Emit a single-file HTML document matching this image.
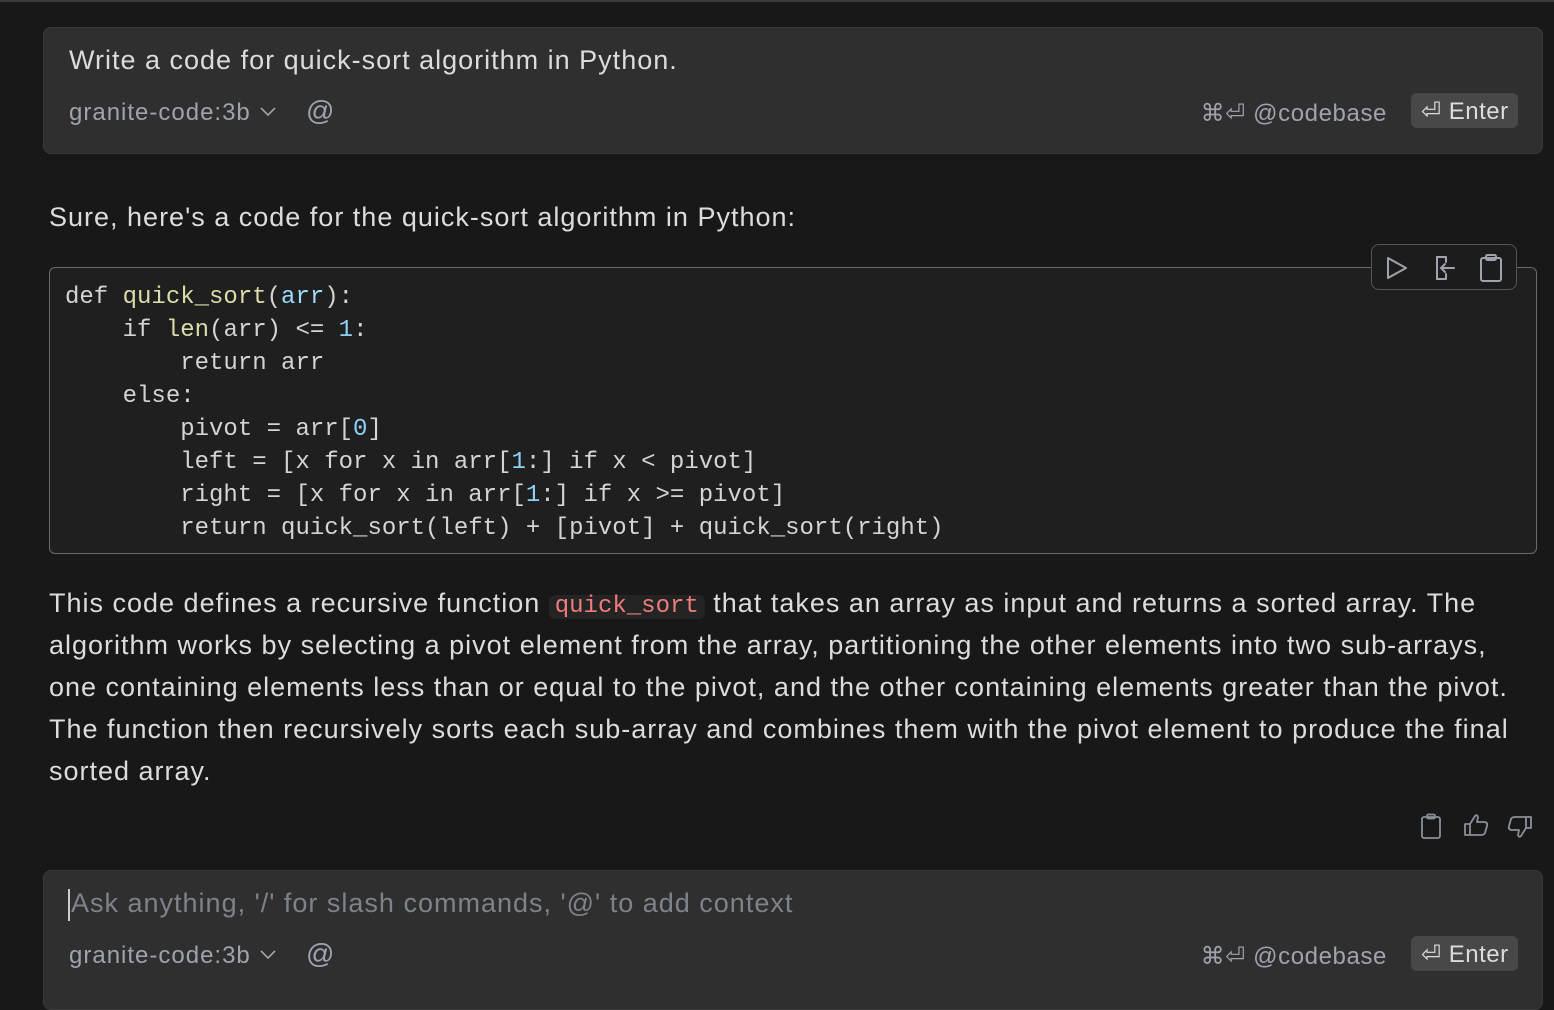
<!DOCTYPE html>
<html><head><meta charset="utf-8"><style>
*{margin:0;padding:0;box-sizing:border-box}
body{width:1554px;height:994px;background:#181818;overflow:hidden;position:relative;font-family:"Liberation Sans",sans-serif;color:#d4d4d4}
.top{position:absolute;left:0;top:0;width:1554px;height:2px;background:#3a3a3a}
.box{position:absolute;left:43px;width:1500px;background:#2f2f2f;border:1px solid #3a3a3a;border-radius:8px}
.q{position:absolute;left:25px;top:17px;font-size:27px;color:#dcdcdc;letter-spacing:1px;white-space:nowrap}
.model{position:absolute;left:25px;font-size:24px;color:#9ea3ad;letter-spacing:1px}
.chev{position:absolute;left:216px}
.at{position:absolute;left:262px;font-size:28px;color:#9ea3ad}
.cb{position:absolute;right:155px;font-size:24px;color:#9ea3ad;letter-spacing:0.6px}
.ent{position:absolute;right:24px;background:#484848;border-radius:6px;height:35px;width:107px;padding:4px 0 0 10px;font-size:24px;color:#dcdcdc;letter-spacing:0.5px}
.p{position:absolute;left:49px;font-size:27px;color:#dcdcdc;line-height:42px;letter-spacing:1px;white-space:nowrap}
.code{position:absolute;left:49px;top:267px;width:1488px;height:287px;background:#1f1f1f;border:1px solid #6a6a6a;border-radius:6px}
pre{position:absolute;left:15px;top:13px;font-family:"Liberation Mono",monospace;font-size:24px;line-height:33px;color:#d4d4d4}
.f{color:#dcdcaa}.v{color:#9cdcfe}.n{color:#8fd0f8}
.tb{position:absolute;left:1371px;top:244px;width:146px;height:46px;background:#1c1c1c;border:1px solid #555;border-radius:8px}
code{font-family:"Liberation Mono",monospace;color:#f07c7c;background:#242424;border-radius:6px;padding:2px 6px;font-size:24px;letter-spacing:0;line-height:20px;display:inline-block}
svg{position:absolute}
</style></head><body>
<div class="top"></div>
<div class="box" style="top:27px;height:127px">
<div class="q">Write a code for quick-sort algorithm in Python.</div>
<div class="model" style="top:71px">granite-code:3b</div>
<svg class="chev" style="top:79px" width="16" height="10" viewBox="0 0 16 10" fill="none" stroke="#9ea3ad" stroke-width="1.6"><path d="M1 1 L8 8 L15 1"/></svg>
<div class="at" style="top:67px">@</div>
<div class="cb" style="top:71px">⌘⏎ @codebase</div>
<div class="ent" style="top:65px">⏎ Enter</div>
</div>
<div class="p" style="top:196px">Sure, here's a code for the quick-sort algorithm in Python:</div>
<div class="code"><pre>def <span class="f">quick_sort</span>(<span class="v">arr</span>):
    if <span class="f">len</span>(arr) &lt;= <span class="n">1</span>:
        return arr
    else:
        pivot = arr[<span class="n">0</span>]
        left = [x for x in arr[<span class="n">1</span>:] if x &lt; pivot]
        right = [x for x in arr[<span class="n">1</span>:] if x &gt;= pivot]
        return quick_sort(left) + [pivot] + quick_sort(right)</pre></div>
<div class="tb">
<svg style="left:12px;top:10px" width="26" height="26" viewBox="0 0 26 26" fill="none" stroke="#9ea3ad" stroke-width="2" stroke-linejoin="round"><path d="M4 3 L22 13 L4 23 Z"/></svg>
<svg style="left:60px;top:9px" width="26" height="28" viewBox="0 0 26 28" fill="none" stroke="#9ea3ad" stroke-width="2" stroke-linecap="round"><path d="M14 3 H5 V25 H14 M14 20 V25 M14 3 V8 M22 14 H9 M13 10 L9 14 L13 18"/></svg>
<svg style="left:106px;top:8px" width="26" height="30" viewBox="0 0 26 30" fill="none" stroke="#9ea3ad" stroke-width="2"><rect x="3" y="5" width="20" height="23" rx="2"/><rect x="8" y="2" width="10" height="5" rx="1.5"/></svg>
</div>
<div class="p" style="top:582px">This code defines a recursive function <code>quick_sort</code> that takes an array as input and returns a sorted array. The</div>
<div class="p" style="top:624px">algorithm works by selecting a pivot element from the array, partitioning the other elements into two sub-arrays,</div>
<div class="p" style="top:666px">one containing elements less than or equal to the pivot, and the other containing elements greater than the pivot.</div>
<div class="p" style="top:708px">The function then recursively sorts each sub-array and combines them with the pivot element to produce the final</div>
<div class="p" style="top:750px">sorted array.</div>
<svg style="left:1420px;top:813px" width="22" height="27" viewBox="0 0 22 27" fill="none" stroke="#8a8f99" stroke-width="1.8"><rect x="2" y="4" width="18" height="21" rx="2"/><rect x="7" y="1.5" width="8" height="4" rx="1.5"/></svg>
<svg style="left:1462px;top:812px" width="28" height="26" viewBox="0 0 28 26" fill="none" stroke="#8a8f99" stroke-width="1.8" stroke-linejoin="round"><path d="M3 12 H8 V23 H3 Z M8 12 L13 4 Q15 2 16 5 L15 10 H23 Q26 11 25 14 L23 21 Q22 23 19 23 H8"/></svg>
<svg style="left:1506px;top:814px" width="28" height="26" viewBox="0 0 28 26" fill="none" stroke="#8a8f99" stroke-width="1.8" stroke-linejoin="round"><path d="M25 14 H20 V3 H25 Z M20 14 L15 22 Q13 24 12 21 L13 16 H5 Q2 15 3 12 L5 5 Q6 3 9 3 H20"/></svg>
<div class="box" style="top:870px;height:140px">
<div style="position:absolute;left:24px;top:18px;width:2px;height:32px;background:#ccc"></div>
<div class="q" style="color:#7e828a;left:27px">Ask anything, '/' for slash commands, '@' to add context</div>
<div class="model" style="top:71px">granite-code:3b</div>
<svg class="chev" style="top:79px" width="16" height="10" viewBox="0 0 16 10" fill="none" stroke="#9ea3ad" stroke-width="1.6"><path d="M1 1 L8 8 L15 1"/></svg>
<div class="at" style="top:67px">@</div>
<div class="cb" style="top:71px">⌘⏎ @codebase</div>
<div class="ent" style="top:65px">⏎ Enter</div>
</div>
</body></html>
